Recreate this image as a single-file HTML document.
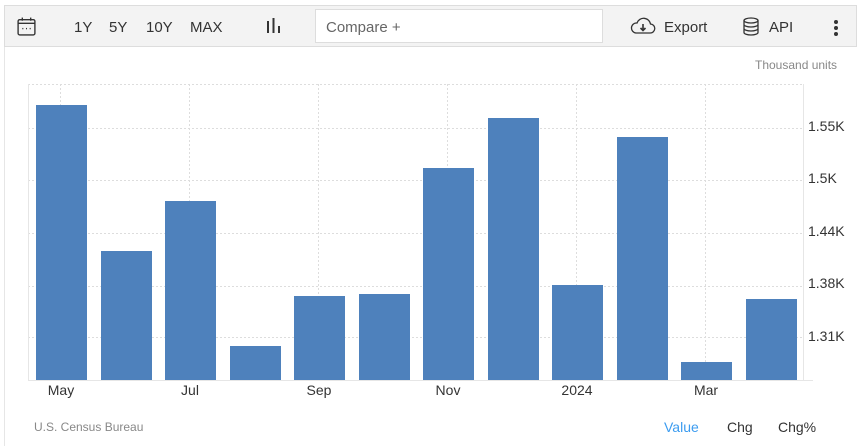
<!DOCTYPE html>
<html><head><meta charset="utf-8"><style>
*{margin:0;padding:0;box-sizing:border-box}
body{width:861px;height:446px;background:#fff;font-family:"Liberation Sans",Arial,sans-serif;position:relative;overflow:hidden}
.a{position:absolute}
.tb{left:4px;top:5px;width:853px;height:42px;background:#f3f3f3;border:1px solid #ddd}
.t{font-size:15px;color:#333;top:19px}
.bar{position:absolute;background:#4e81bc;width:51px;bottom:66px}
.yl{position:absolute;left:808px;font-size:14px;color:#333}
.xl{position:absolute;top:382px;font-size:14px;color:#333;transform:translateX(-50%)}
</style></head><body>
<div class="a" style="left:4px;top:46px;width:1px;height:400px;background:#e6e6e6"></div>
<div class="a tb"></div>
<svg class="a" style="left:16px;top:16px" width="21" height="21" viewBox="0 0 20 20" fill="none" stroke="#333" stroke-width="1.3"><rect x="2" y="3.5" width="16" height="14.5" rx="1.5"/><line x1="2" y1="7" x2="18" y2="7"/><line x1="6" y1="1.5" x2="6" y2="4.5"/><line x1="14" y1="1.5" x2="14" y2="4.5"/><line x1="6" y1="12" x2="7" y2="12"/><line x1="9.5" y1="12" x2="10.5" y2="12"/><line x1="13" y1="12" x2="14" y2="12"/></svg>
<div class="a t" style="left:74px">1Y</div>
<div class="a t" style="left:109px">5Y</div>
<div class="a t" style="left:146px">10Y</div>
<div class="a t" style="left:190px">MAX</div>
<svg class="a" style="left:265px;top:18px" width="18" height="16"><rect x="2" y="3" width="2" height="12" fill="#333"/><rect x="7.5" y="0" width="2" height="15" fill="#333"/><rect x="13" y="8" width="2" height="7" fill="#333"/></svg>
<div class="a" style="left:315px;top:9px;width:288px;height:34px;background:#fff;border:1px solid #ddd"></div>
<div class="a" style="left:326px;top:19px;font-size:15px;color:#666">Compare +</div>
<svg class="a" style="left:630px;top:17px" width="26" height="18" viewBox="0 0 26 18" fill="none" stroke="#333" stroke-width="1.3"><path d="M6 16h14a4.5 4.5 0 0 0 .5-9A7 7 0 0 0 7 6a5 5 0 0 0-1 10z"/><path d="M13 7v6M10.5 11l2.5 2.5 2.5-2.5" stroke-width="1.6"/></svg>
<div class="a t" style="left:664px">Export</div>
<svg class="a" style="left:742px;top:16px" width="18" height="21" viewBox="0 0 18 20" fill="none" stroke="#333" stroke-width="1.3"><ellipse cx="9" cy="4" rx="7" ry="2.5"/><path d="M2 4v12c0 1.4 3.1 2.5 7 2.5s7-1.1 7-2.5V4M2 8c0 1.4 3.1 2.5 7 2.5s7-1.1 7-2.5M2 12c0 1.4 3.1 2.5 7 2.5s7-1.1 7-2.5"/></svg>
<div class="a t" style="left:769px">API</div>
<div class="a" style="left:834px;top:20px;width:4px;height:4px;border-radius:2px;background:#333;box-shadow:0 6px #333,0 12px #333"></div>
<div class="a" style="left:755px;top:58px;font-size:12px;color:#888">Thousand units</div>
<svg class="a" style="left:0;top:0" width="861" height="446">
<g stroke="#ddd" stroke-dasharray="2,2" stroke-width="1">
<line x1="28" y1="84.5" x2="803" y2="84.5"/><line x1="28" y1="128.5" x2="803" y2="128.5"/><line x1="28" y1="180.5" x2="803" y2="180.5"/><line x1="28" y1="233.5" x2="803" y2="233.5"/><line x1="28" y1="286.5" x2="803" y2="286.5"/><line x1="28" y1="337.5" x2="803" y2="337.5"/>
<line x1="60.5" y1="84" x2="60.5" y2="380"/><line x1="189.5" y1="84" x2="189.5" y2="380"/><line x1="318.5" y1="84" x2="318.5" y2="380"/><line x1="447.5" y1="84" x2="447.5" y2="380"/><line x1="576.5" y1="84" x2="576.5" y2="380"/><line x1="705.5" y1="84" x2="705.5" y2="380"/>
</g>
<line x1="28.5" y1="84" x2="28.5" y2="380" stroke="#e6e6e6"/>
<line x1="803.5" y1="84" x2="803.5" y2="380" stroke="#e6e6e6"/>
<line x1="28" y1="380.5" x2="813" y2="380.5" stroke="#e6e6e6"/>
</svg>
<div class="bar" style="left:36px;top:105px"></div>
<div class="bar" style="left:101px;top:251px"></div>
<div class="bar" style="left:165px;top:201px"></div>
<div class="bar" style="left:230px;top:346px"></div>
<div class="bar" style="left:294px;top:296px"></div>
<div class="bar" style="left:359px;top:294px"></div>
<div class="bar" style="left:423px;top:168px"></div>
<div class="bar" style="left:488px;top:118px"></div>
<div class="bar" style="left:552px;top:285px"></div>
<div class="bar" style="left:617px;top:137px"></div>
<div class="bar" style="left:681px;top:362px"></div>
<div class="bar" style="left:746px;top:299px"></div>
<div class="yl" style="top:118px">1.55K</div>
<div class="yl" style="top:170px">1.5K</div>
<div class="yl" style="top:223px">1.44K</div>
<div class="yl" style="top:275px">1.38K</div>
<div class="yl" style="top:328px">1.31K</div>
<div class="xl" style="left:61px">May</div>
<div class="xl" style="left:190px">Jul</div>
<div class="xl" style="left:319px">Sep</div>
<div class="xl" style="left:448px">Nov</div>
<div class="xl" style="left:577px">2024</div>
<div class="xl" style="left:706px">Mar</div>
<div class="a" style="left:34px;top:420px;font-size:12px;color:#888">U.S. Census Bureau</div>
<div class="a" style="left:664px;top:419px;font-size:14px;color:#3c9cf0">Value</div>
<div class="a" style="left:727px;top:419px;font-size:14px;color:#333">Chg</div>
<div class="a" style="left:778px;top:419px;font-size:14px;color:#333">Chg%</div>
</body></html>
